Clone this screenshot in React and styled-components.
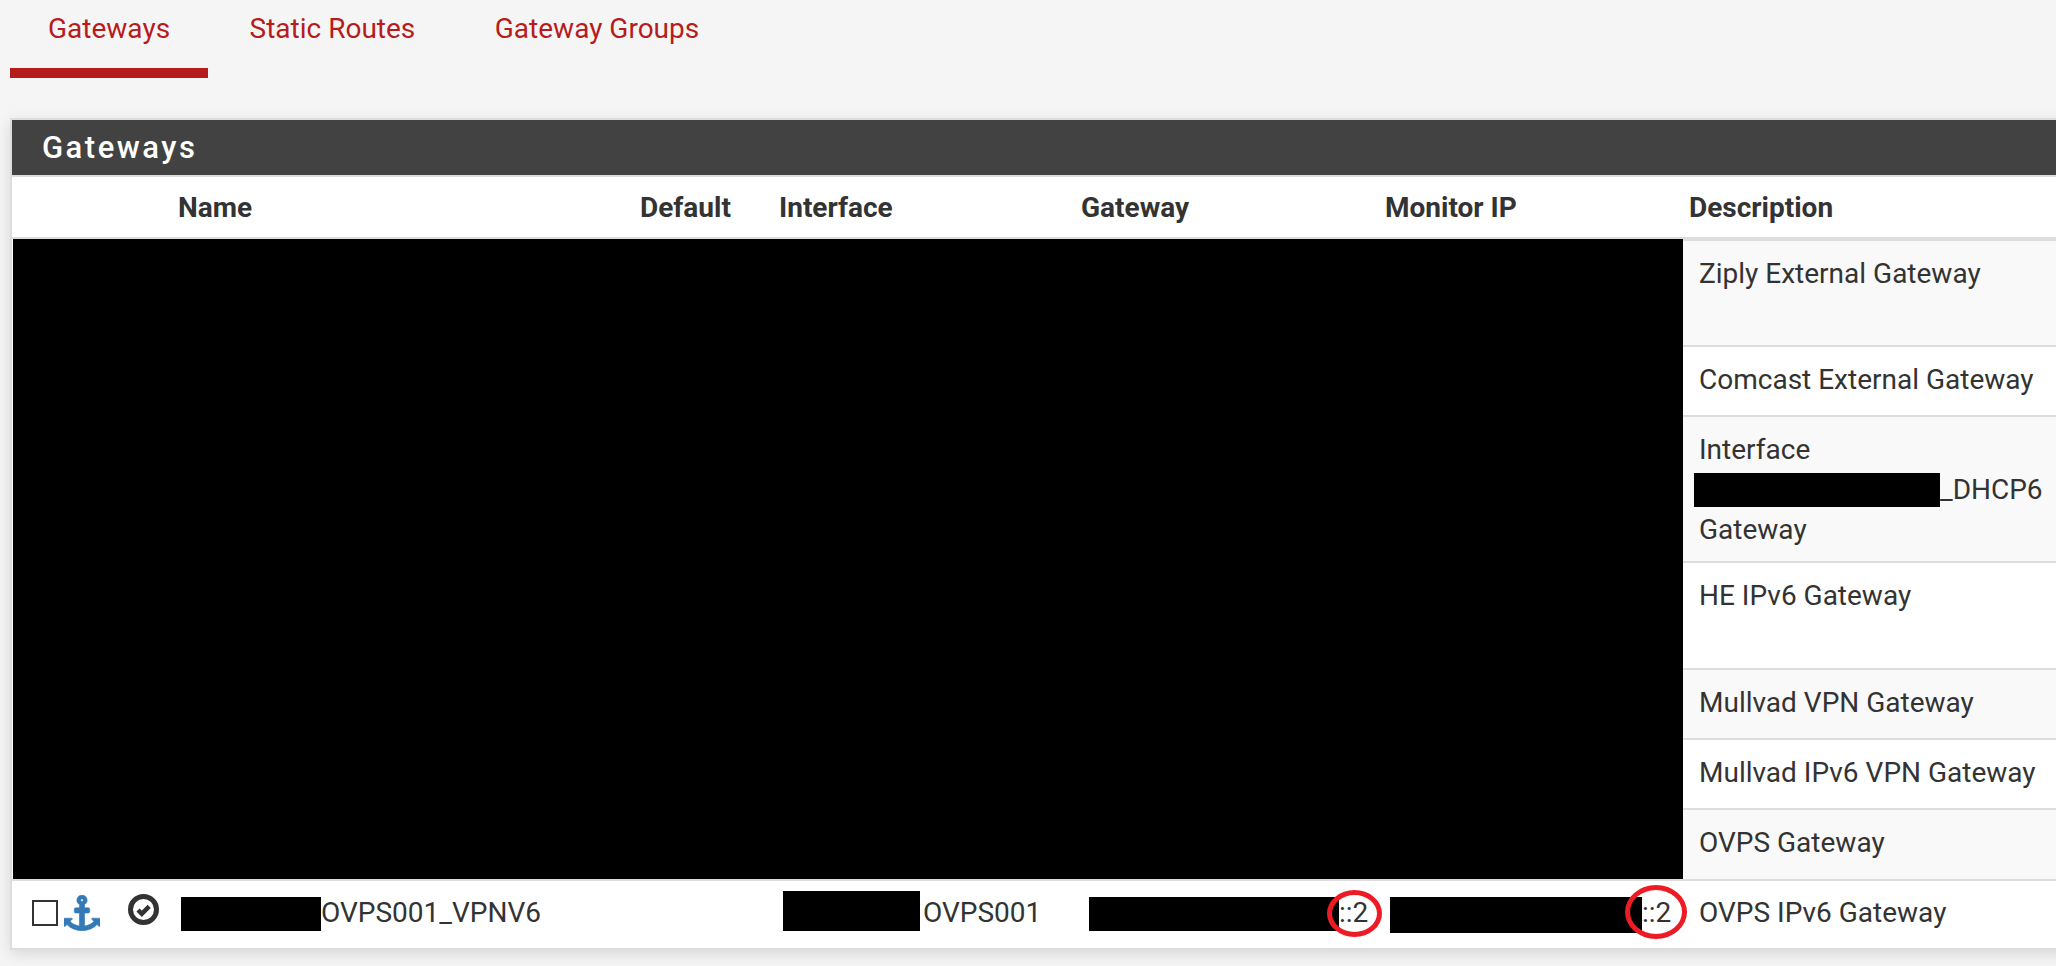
import React from "react";
import styled, { createGlobalStyle } from "styled-components";

const Global = createGlobalStyle`
  html, body {
    margin: 0;
    background: #f5f5f5;
    overflow: hidden;
    height: 966px;
  }
  body {
    font-family: Roboto, "Liberation Sans", sans-serif;
    color: #333;
  }
`;

const Tabs = styled.nav`
  display: flex;
  gap: 3.5px;
  padding-left: 10px;
  height: 78px;
`;

const Tab = styled.a`
  box-sizing: border-box;
  padding: 9px 38px 0;
  height: 78px;
  font-size: 28px;
  line-height: 40px;
  color: #b71c1c;
  border-bottom: ${(p) => (p.$active ? "10px solid #b71c1c" : "10px solid transparent")};
`;

const Panel = styled.section`
  margin: 40px 0 0 10px;
  width: 2100px;
  background: #fff;
  border: 2px solid #ddd;
  border-right: 0;
  box-shadow: 0 4px 14px rgba(0, 0, 0, 0.12);
`;

const PanelTitle = styled.h2`
  margin: 0;
  height: 55px;
  padding-left: 30px;
  background: #424242;
  color: #fff;
  border-bottom: 2px solid #ddd;
  font-size: 31px;
  font-weight: 500;
  letter-spacing: 2.5px;
  line-height: 55px;
  box-sizing: content-box;
`;

const Table = styled.table`
  table-layout: fixed;
  width: 2098px;
  border-collapse: separate;
  border-spacing: 0;
  font-size: 28px;
  line-height: 40px;
`;

const Th = styled.th`
  box-sizing: border-box;
  height: 62px;
  padding: 2px 6px 0;
  text-align: left;
  font-weight: 700;
  border-bottom: 2px solid #ddd;
`;

const Row = styled.tr`
  height: ${(p) => p.$h}px;
  background: ${(p) => (p.$odd ? "#f9f9f9" : "#fff")};
`;

const Td = styled.td`
  padding: ${(p) => p.$top ?? 13}px 0 0 ${(p) => p.$pad ?? 16}px;
  vertical-align: top;
  white-space: nowrap;
  border-top: 2px solid #ddd;
  box-sizing: border-box;
`;

const Blacked = styled.td`
  padding: 0;
  background: #000;
  border-left: 1px solid #fff;
`;

const Redact = styled.span`
  display: inline-block;
  width: ${(p) => p.$w}px;
  height: ${(p) => p.$h}px;
  margin: -8px ${(p) => p.$right ?? 0}px 0 ${(p) => p.$left ?? 0}px;
  background: #000;
  vertical-align: ${(p) => p.$drop}px;
`;

const Controls = styled.div`
  display: flex;
  align-items: center;
  gap: 6px;
  height: 40px;
`;

const Check = styled.input`
  appearance: none;
  width: 26px;
  height: 26px;
  margin: 0;
  background: #fff;
  border: 2px solid #333;
  box-sizing: border-box;
`;

const AnchorIcon = styled.svg`
  display: block;
  width: 36px;
  height: 36px;
  fill: #337ab7;
  stroke: #337ab7;
  stroke-width: 30;
`;

const DefaultIcon = styled.svg`
  display: block;
  width: 31px;
  height: 31px;
  margin-top: -8px;
`;

const Marked = styled.span`
  position: relative;
  display: inline-block;
`;

const Ring = styled.i`
  position: absolute;
  left: ${(p) => p.$x}px;
  top: ${(p) => p.$y}px;
  width: ${(p) => p.$w}px;
  height: ${(p) => p.$h}px;
  border: 5px solid #ed1c24;
  border-radius: 50%;
  box-sizing: border-box;
`;

const columns = [106, 54, 462, 139, 302, 304, 304, 427];
const ColW = styled.col`
  width: ${(p) => p.$w}px;
`;

const descriptions = [
  { h: 106, text: "Ziply External Gateway" },
  { h: 70, text: "Comcast External Gateway" },
  {
    h: 146,
    text: (
      <>
        Interface
        <br />
        <Redact $w={246} $h={34} $drop={-8} $left={-5} />
        _DHCP6
        <br />
        Gateway
      </>
    ),
  },
  { h: 107, text: "HE IPv6 Gateway" },
  { h: 70, text: "Mullvad VPN Gateway" },
  { h: 70, text: "Mullvad IPv6 VPN Gateway" },
  { h: 71, text: "OVPS Gateway" },
];

export default function App() {
  return (
    <>
      <Global />
      <Tabs>
        <Tab $active>Gateways</Tab>
        <Tab>Static Routes</Tab>
        <Tab>Gateway Groups</Tab>
      </Tabs>
      <Panel>
        <PanelTitle>Gateways</PanelTitle>
        <Table>
          <colgroup>
            {columns.map((w, i) => (
              <ColW key={i} $w={w} />
            ))}
          </colgroup>
          <thead>
            <tr>
              <Th />
              <Th />
              <Th>Name</Th>
              <Th>Default</Th>
              <Th>Interface</Th>
              <Th>Gateway</Th>
              <Th>Monitor IP</Th>
              <Th>Description</Th>
            </tr>
          </thead>
          <tbody>
            {descriptions.map((d, i) => (
              <Row key={i} $h={d.h} $odd={i % 2 === 0}>
                {i === 0 && <Blacked rowSpan={7} colSpan={7} />}
                <Td>{d.text}</Td>
              </Row>
            ))}
            <Row $h={69}>
              <Td $top={12} $pad={20}>
                <Controls>
                  <Check type="checkbox" />
                  <AnchorIcon viewBox="0 0 1792 1792">
                    <path d="M960 256q0-26-19-45t-45-19-45 19-19 45 19 45 45 19 45-19 19-45zm832 928v352q0 22-20 30-8 2-12 2-12 0-23-9l-93-93q-119 143-318.5 226.5t-429.5 83.5-429.5-83.5-318.5-226.5l-93 93q-9 9-23 9-4 0-12-2-20-8-20-30v-352q0-14 9-23t23-9h352q22 0 30 20 8 19-7 35l-100 100q67 91 189.5 153.5t271.5 82.5v-647h-192q-26 0-45-19t-19-45v-128q0-26 19-45t45-19h192v-163q-58-34-93-92.5t-35-128.5q0-106 75-181t181-75 181 75 75 181q0 70-35 128.5t-93 92.5v163h192q26 0 45 19t19 45v128q0 26-19 45t-45 19h-192v647q149-20 271.5-82.5t189.5-153.5l-100-100q-15-16-7-35 8-20 30-20h352q14 0 23 9t9 23z" />
                  </AnchorIcon>
                </Controls>
              </Td>
              <Td $top={12} $pad={10}>
                <Controls>
                  <DefaultIcon viewBox="0 0 31 31">
                    <circle cx="15.5" cy="15.5" r="13" fill="none" stroke="#333" strokeWidth="5" />
                    <path d="M10 16l3.8 3.8 7.4-7.4" fill="none" stroke="#333" strokeWidth="4.5" />
                  </DefaultIcon>
                </Controls>
              </Td>
              <Td $top={12} $pad={9} colSpan={2}>
                <Redact $w={140} $h={34} $drop={-9} />
                OVPS001_VPNV6
              </Td>
              <Td $top={12} $pad={10}>
                <Redact $w={137} $h={40} $drop={-9} $right={3} />
                OVPS001
              </Td>
              <Td $top={12} $pad={14}>
                <Redact $w={250} $h={34} $drop={-9} />
                <Marked>
                  ::2
                  <Ring $x={-12} $y={-3} $w={55} $h={47} />
                </Marked>
              </Td>
              <Td $top={12} $pad={11}>
                <Redact $w={252} $h={36} $drop={-11} />
                <Marked>
                  ::2
                  <Ring $x={-17} $y={-8} $w={62} $h={54} />
                </Marked>
              </Td>
              <Td $top={12}>OVPS IPv6 Gateway</Td>
            </Row>
          </tbody>
        </Table>
      </Panel>
    </>
  );
}
